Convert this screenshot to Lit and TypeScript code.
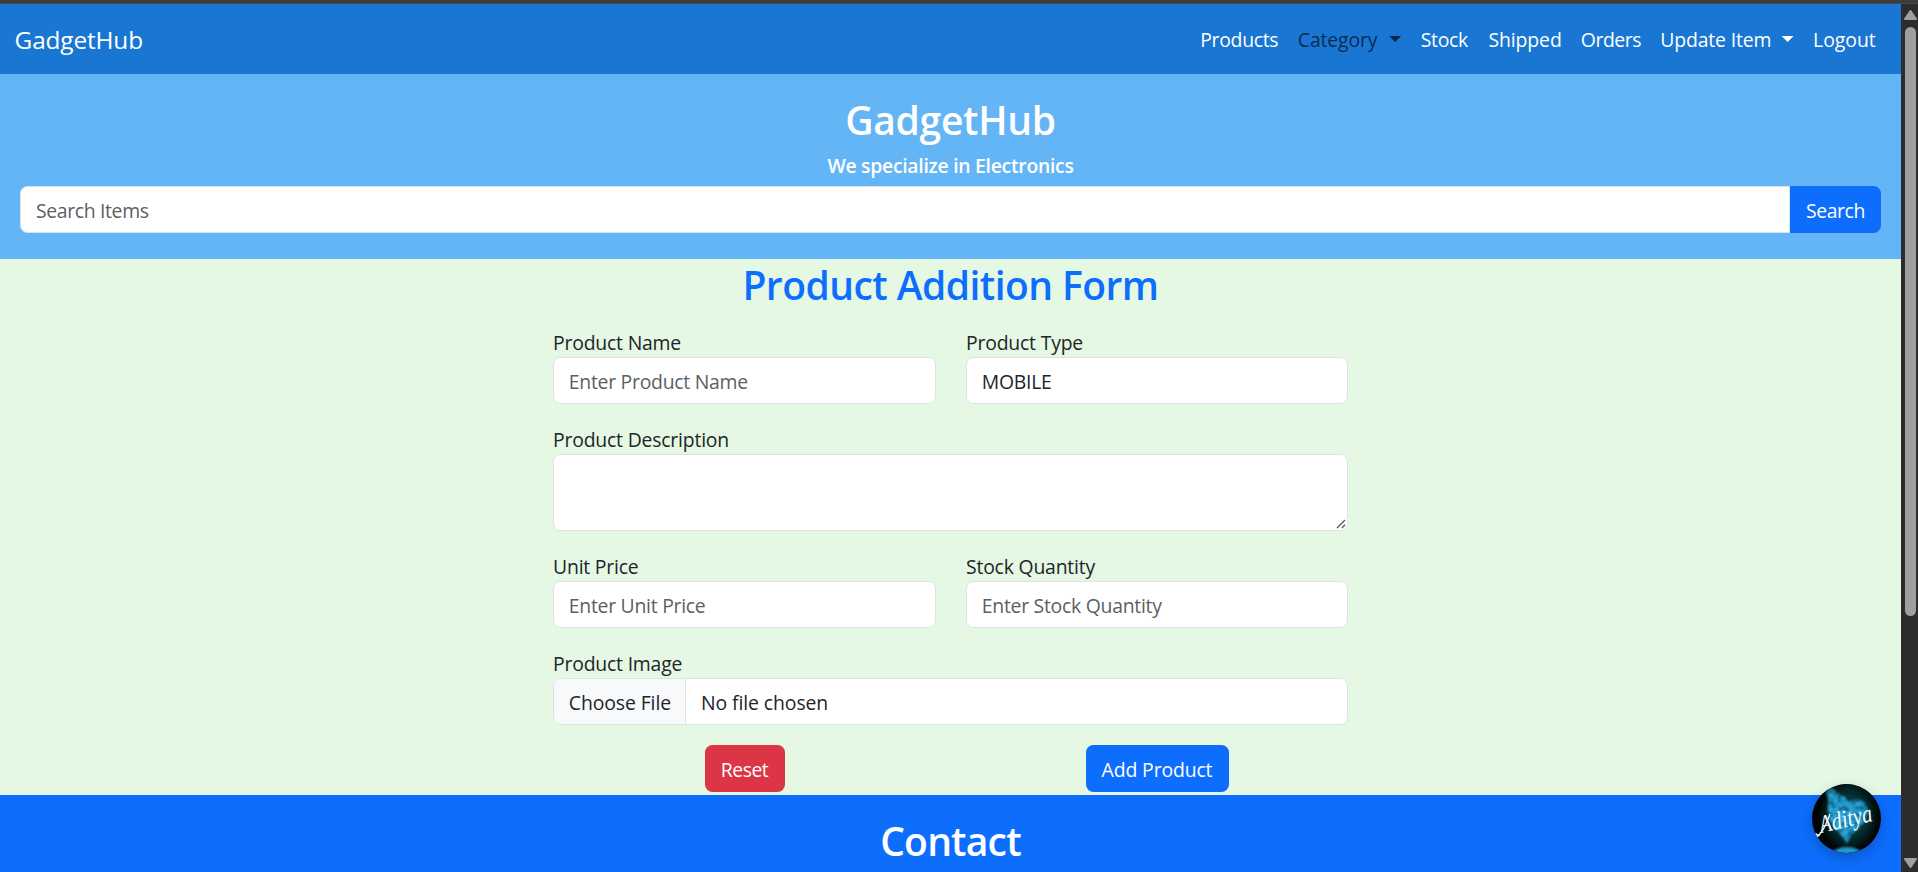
import { LitElement, html, css, svg } from "lit";
import { styleMap } from "lit/directives/style-map.js";

interface NavItem {
  label: string;
  width: number;
  spacing: number;
  menu?: boolean;
  muted?: boolean;
}

const NAV: NavItem[] = [
  { label: "Products", width: 97.6, spacing: -0.3 },
  { label: "Category", width: 122.8, spacing: -0.13, menu: true, muted: true },
  { label: "Stock", width: 67.8, spacing: -0.25 },
  { label: "Shipped", width: 92.4, spacing: -0.09 },
  { label: "Orders", width: 79.5, spacing: -0.45 },
  { label: "Update Item", width: 152.8, spacing: -0.15, menu: true },
  { label: "Logout", width: 67.9, spacing: -0.03 },
];

// Deterministic speckle for the heart-shaped nebula on the avatar.
const SPECKS = Array.from({ length: 110 }, (_, i) => {
  const a = (i * 137.5 * Math.PI) / 180;
  const r = Math.sqrt(i / 110);
  return {
    x: 35 + Math.cos(a) * r * 23,
    y: 29 + Math.sin(a) * r * 24,
    s: 0.6 + ((i * 7) % 5) * 0.3,
    c: ["#7fd6f5", "#0e4f68", "#35b8ea", "#0a3a4c", "#1b86b4"][(i * 3) % 5],
  };
});

class ChatAvatar extends LitElement {
  static styles = css`
    :host {
      display: block;
      width: 69px;
      height: 69px;
      border-radius: 50%;
      box-shadow: 0 5px 13px rgba(0, 0, 0, 0.22);
    }
    svg {
      display: block;
      overflow: visible;
    }
    .name {
      font: italic 400 25px "Liberation Serif", serif;
      fill: #f4fbff;
    }
  `;
  render() {
    return html`<svg width="69" height="69" viewBox="0 0 69 69">
      <defs>
        <clipPath id="disc"><circle cx="34.5" cy="34.5" r="34.5" /></clipPath>
        <clipPath id="heart">
          <path d="M35 60C31 50 18 44 16 30C15 22 18 16 14 10C15 3 20 2 23 6C27 11 33 12 38 18C43 14 50 15 54 20C60 32 50 42 42 48C38 52 37 56 35 60Z" />
        </clipPath>
        <radialGradient id="glow" cx=".5" cy=".45" r=".5">
          <stop offset="0" stop-color="#0d5a6c" />
          <stop offset=".65" stop-color="#052a2c" />
          <stop offset="1" stop-color="#010605" />
        </radialGradient>
        <radialGradient id="core" cx=".45" cy=".5" r=".6">
          <stop offset="0" stop-color="#2fb0e6" />
          <stop offset=".6" stop-color="#1987b5" />
          <stop offset="1" stop-color="#0a4257" />
        </radialGradient>
        <filter id="soft" x="-.2" y="-.2" width="1.4" height="1.4"><feGaussianBlur stdDeviation=".9" /></filter>
      </defs>
      <g clip-path="url(#disc)">
        <rect width="69" height="69" fill="#010403" />
        <ellipse cx="37" cy="35" rx="30" ry="36" fill="url(#glow)" />
        <g filter="url(#soft)">
          <g clip-path="url(#heart)">
            <rect width="69" height="69" fill="url(#core)" />
            ${SPECKS.map((p) => svg`<circle cx=${p.x} cy=${p.y} r=${p.s} fill=${p.c} />`)}
          </g>
          <ellipse cx="35" cy="71" rx="15" ry="8" fill="#2497cc" />
        </g>
        <path d="M4 50C7 54 12 46 18 30M4 49C3 54 7 53 9 48" fill="none" stroke="#f4fbff" stroke-width="1.3" />
      </g>
      <text class="name" x="9" y="49" textLength="54" lengthAdjust="spacingAndGlyphs" transform="rotate(-13 9 49)">Aditya</text>
    </svg>`;
  }
}
customElements.define("chat-avatar", ChatAvatar);

class AppRoot extends LitElement {
  static styles = css`
    :host {
      display: flex;
      flex-direction: column;
      width: 1918px;
      height: 872px;
      overflow: hidden;
      font: 400 19.4px/30px "Open Sans", sans-serif;
      color: #212529;
      background: #e5f8e4;
    }
    * {
      box-sizing: border-box;
    }
    .frame-edge {
      flex: none;
      height: 4px;
      background: #3c3c3c;
      border-bottom: 1px solid #484848;
    }
    .window {
      flex: 1;
      min-height: 0;
      display: flex;
    }
    .page {
      position: relative;
      width: 1901px;
      overflow: hidden;
      display: flex;
      flex-direction: column;
    }
    .navbar {
      flex: none;
      height: 70px;
      background: #1976d2;
      color: #fff;
      display: flex;
      align-items: center;
      justify-content: space-between;
      padding: 2px 20px 0 14.6px;
    }
    .brand {
      font-size: 24.4px;
      letter-spacing: -0.15px;
    }
    .links {
      display: flex;
    }
    .link {
      display: flex;
      align-items: center;
      white-space: nowrap;
    }
    .muted {
      color: rgba(0, 0, 0, 0.65);
    }
    .caret {
      width: 12px;
      height: 6px;
      margin: -2px 19.5px 0 auto;
      background: currentColor;
      clip-path: polygon(0 0, 100% 0, 50% 100%);
    }
    .hero {
      flex: none;
      height: 185px;
      padding: 20px 20px 26px;
      background: #64b5f6;
      color: #fff;
      text-align: center;
    }
    h1,
    h2,
    h6 {
      margin: 0;
      padding-top: 2px;
      font-weight: 600;
      font-size: 39px;
      line-height: 48px;
    }
    .hero h1 {
      letter-spacing: -0.26px;
    }
    h6 {
      margin: 8px 0;
      font-size: 19.4px;
      line-height: 24px;
      letter-spacing: -0.29px;
    }
    .search {
      display: flex;
    }
    .control {
      display: block;
      width: 100%;
      height: 47px;
      margin: 0;
      padding: 2px 14.8px 0;
      border: 1px solid #dee2e6;
      border-radius: 7.5px;
      background: #fff;
      color: #212529;
      font: inherit;
      letter-spacing: -0.27px;
      outline: none;
      resize: none;
    }
    .control::placeholder {
      color: #5a5f64;
      opacity: 1;
    }
    .search .control {
      flex: 1;
      padding-left: 15px;
      letter-spacing: -0.35px;
      border-radius: 7.5px 0 0 7.5px;
    }
    .btn {
      height: 47px;
      padding: 2px 0 0;
      border: 0;
      border-radius: 7.5px;
      background: #0d6efd;
      color: #fff;
      font: inherit;
      text-align: center;
    }
    .btn-search {
      width: 91px;
      border-radius: 0 7.5px 7.5px 0;
      letter-spacing: -0.4px;
    }
    .btn-reset {
      width: 80px;
      background: #dc3545;
      letter-spacing: -0.5px;
    }
    .btn-add {
      width: 143px;
      letter-spacing: -0.13px;
    }
    .form-area {
      flex: none;
      height: 536px;
      display: flex;
      flex-direction: column;
      align-items: center;
    }
    .form-area h2 {
      color: #0d6efd;
      letter-spacing: -0.54px;
    }
    .form {
      width: 795px;
      margin-top: 18px;
      display: grid;
      grid-template-columns: 383px 382px;
      gap: 20px 30px;
    }
    .wide {
      grid-column: 1 / -1;
    }
    label {
      display: block;
      height: 30px;
      padding-top: 1px;
      letter-spacing: -0.2px;
    }
    .area-wrap {
      position: relative;
    }
    .area-wrap .control {
      height: 77px;
    }
    .grip {
      position: absolute;
      right: 2px;
      bottom: 2px;
    }
    .file {
      display: flex;
      padding: 0;
      overflow: hidden;
      color: #212529;
    }
    .file-btn {
      width: 132px;
      padding: 9px 0 0 14.8px;
      background: #f8f9fa;
      border-right: 1px solid #dee2e6;
      letter-spacing: -0.1px;
    }
    .file-name {
      padding: 9px 0 0 15px;
      letter-spacing: -0.09px;
    }
    .cell {
      display: flex;
      justify-content: center;
    }
    .contact {
      flex: 1;
      background: #0d6efd;
      color: #fff;
      text-align: center;
      padding-top: 20px;
    }
    .contact h2 {
      letter-spacing: -0.79px;
    }
    chat-avatar {
      position: absolute;
      right: 20px;
      bottom: 19px;
    }
    .scrollbar {
      width: 17px;
      background: #2c2c2c;
      display: flex;
      flex-direction: column;
      align-items: center;
      padding: 6px 0 4px 1px;
    }
    .scrollbar svg {
      display: block;
      flex: none;
      fill: #9f9f9f;
      stroke: #9f9f9f;
      stroke-width: 2;
      stroke-linejoin: round;
    }
    .thumb {
      width: 11px;
      height: 589px;
      margin: 7px 0 auto;
      border-radius: 5.5px;
      background: #9f9f9f;
    }
  `;

  private field(label: string, placeholder: string, value = "") {
    return html`<div>
      <label>${label}</label>
      <input class="control" placeholder=${placeholder} .value=${value} />
    </div>`;
  }

  render() {
    return html`
      <div class="frame-edge"></div>
      <div class="window">
        <div class="page">
          <nav class="navbar">
            <span class="brand">GadgetHub</span>
            <div class="links">
              ${NAV.map(
                (n) => html`<a
                  class="link ${n.muted ? "muted" : ""}"
                  style=${styleMap({ width: `${n.width}px`, letterSpacing: `${n.spacing}px` })}
                  >${n.label}${n.menu ? html`<i class="caret"></i>` : ""}</a
                >`
              )}
            </div>
          </nav>
          <header class="hero">
            <h1>GadgetHub</h1>
            <h6>We specialize in Electronics</h6>
            <div class="search">
              <input class="control" placeholder="Search Items" />
              <button class="btn btn-search">Search</button>
            </div>
          </header>
          <main class="form-area">
            <h2>Product Addition Form</h2>
            <div class="form">
              ${this.field("Product Name", "Enter Product Name")}
              ${this.field("Product Type", "", "MOBILE")}
              <div class="wide">
                <label>Product Description</label>
                <div class="area-wrap">
                  <textarea class="control"></textarea>
                  <svg class="grip" width="10" height="10" viewBox="0 0 10 10">
                    <path d="M1 9L9 1M5.8 9L9 5.8" stroke="#555" stroke-width="1.3" fill="none" />
                  </svg>
                </div>
              </div>
              ${this.field("Unit Price", "Enter Unit Price")}
              ${this.field("Stock Quantity", "Enter Stock Quantity")}
              <div class="wide">
                <label>Product Image</label>
                <div class="control file">
                  <span class="file-btn">Choose File</span>
                  <span class="file-name">No file chosen</span>
                </div>
              </div>
              <div class="cell"><button class="btn btn-reset">Reset</button></div>
              <div class="cell"><button class="btn btn-add">Add Product</button></div>
            </div>
          </main>
          <footer class="contact"><h2>Contact</h2></footer>
          <chat-avatar></chat-avatar>
        </div>
        <div class="scrollbar">
          <svg width="13" height="10" viewBox="0 0 13 10"><path d="M6.5 1L12 9H1Z" /></svg>
          <div class="thumb"></div>
          <svg width="13" height="10" viewBox="0 0 13 10"><path d="M6.5 9L12 1H1Z" /></svg>
        </div>
      </div>
    `;
  }
}
customElements.define("app-root", AppRoot);
